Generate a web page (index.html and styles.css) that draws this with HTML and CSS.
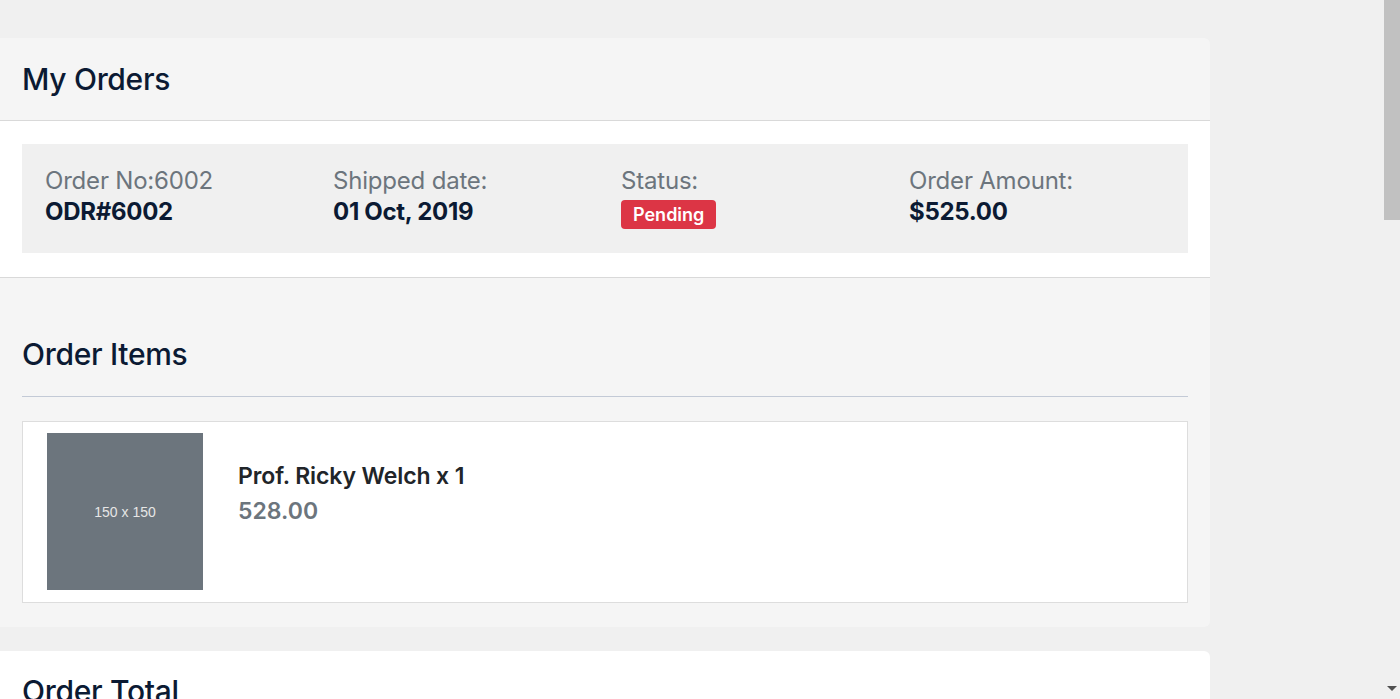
FILE: index.html
```html
<!DOCTYPE html>
<html lang="en">
<head>
<meta charset="utf-8">
<title>My Orders</title>
<link rel="stylesheet" href="styles.css">
</head>
<body>
<div class="page">
  <section class="card">
    <header class="card-header">
      <h2 class="title">My Orders</h2>
    </header>
    <div class="card-body">
      <div class="summary">
        <div class="summary-col">
          <div class="label">Order No:6002</div>
          <div class="value">ODR#6002</div>
        </div>
        <div class="summary-col">
          <div class="label">Shipped date:</div>
          <div class="value">01 Oct, 2019</div>
        </div>
        <div class="summary-col">
          <div class="label">Status:</div>
          <span class="badge">Pending</span>
        </div>
        <div class="summary-col">
          <div class="label">Order Amount:</div>
          <div class="value">$525.00</div>
        </div>
      </div>
    </div>
    <div class="items">
      <h2 class="title">Order Items</h2>
      <hr class="rule">
      <div class="item">
        <div class="thumb">150 x 150</div>
        <div class="item-info">
          <div class="item-name">Prof. Ricky Welch x 1</div>
          <div class="item-price">528.00</div>
        </div>
      </div>
    </div>
  </section>

  <section class="card card-white">
    <div class="total-body">
      <h2 class="title">Order Total</h2>
    </div>
  </section>
</div>

<div class="scrollbar" aria-hidden="true">
  <div class="scroll-thumb"></div>
  <div class="scroll-arrow"></div>
</div>
</body>
</html>
```

FILE: styles.css
```css
* { box-sizing: border-box; }

html, body {
  margin: 0;
  padding: 0;
  background: #f0f0f0;
}

body {
  font-family: Inter, "Open Sans", "Liberation Sans", sans-serif;
  color: #0b1a33;
}

.page {
  width: 1210px;
  padding-top: 38px;
  display: flex;
  flex-direction: column;
  gap: 24px;
}

.card {
  background: #f5f5f5;
  border-radius: 0 6px 6px 0;
}

.card-white {
  background: #fff;
  min-height: 600px;
}

.card-header {
  height: 83px;
  padding: 0 22px;
  display: flex;
  align-items: center;
  border-bottom: 1px solid #d9d9d9;
}

.title {
  margin: 0;
  font-size: 30px;
  font-weight: 500;
  line-height: 36px;
  color: #0b1a33;
  letter-spacing: -0.3px;
}

.card-body {
  background: #fff;
  padding: 23px 22px 24px;
  border-bottom: 1px solid #d9d9d9;
}

.summary {
  background: #f0f0f0;
  height: 109px;
  padding: 23px 0 0 23px;
  display: grid;
  grid-template-columns: repeat(4, 288px);
  align-content: start;
}

.summary-col {
  display: flex;
  flex-direction: column;
  align-items: flex-start;
}

.label {
  font-size: 24px;
  line-height: 28px;
  color: #6c757d;
  letter-spacing: -0.2px;
}

.value {
  font-size: 24px;
  line-height: 33px;
  font-weight: 700;
  color: #0b1a33;
  letter-spacing: -0.3px;
}

.badge {
  display: inline-block;
  margin-top: 5px;
  height: 29px;
  padding: 0 12px;
  line-height: 29px;
  background: #dc3545;
  color: #fff;
  border-radius: 4px;
  font-size: 18px;
  font-weight: 600;
}

.items {
  padding: 58px 22px 24px;
}

.rule {
  margin: 24px 0 24px;
  border: 0;
  border-top: 1px solid #c3cad6;
}

.item {
  background: #fff;
  border: 1px solid #dddddd;
  padding: 11px 24px 12px;
  display: flex;
  gap: 35px;
}

.thumb {
  width: 156px;
  height: 157px;
  background: #6c757d;
  color: #e6e6e6;
  font-family: "Liberation Sans", Arial, sans-serif;
  font-size: 14px;
  display: flex;
  align-items: center;
  justify-content: center;
}

.item-info {
  padding-top: 28px;
}

.item-name {
  font-size: 23px;
  line-height: 30px;
  font-weight: 600;
  color: #212529;
  letter-spacing: -0.1px;
}

.item-price {
  font-size: 23px;
  line-height: 40px;
  font-weight: 600;
  color: #6c757d;
}

.total-body {
  padding: 22px 22px 24px;
}

.scrollbar {
  position: fixed;
  top: 0;
  right: 0;
  width: 16px;
  height: 100vh;
  background: #f0f0f0;
}

.scroll-thumb {
  height: 220px;
  background: #c1c1c1;
}

.scroll-arrow {
  position: absolute;
  bottom: 8px;
  left: 3px;
  width: 0;
  height: 0;
  border-left: 5px solid transparent;
  border-right: 5px solid transparent;
  border-top: 5px solid #505050;
}
```
